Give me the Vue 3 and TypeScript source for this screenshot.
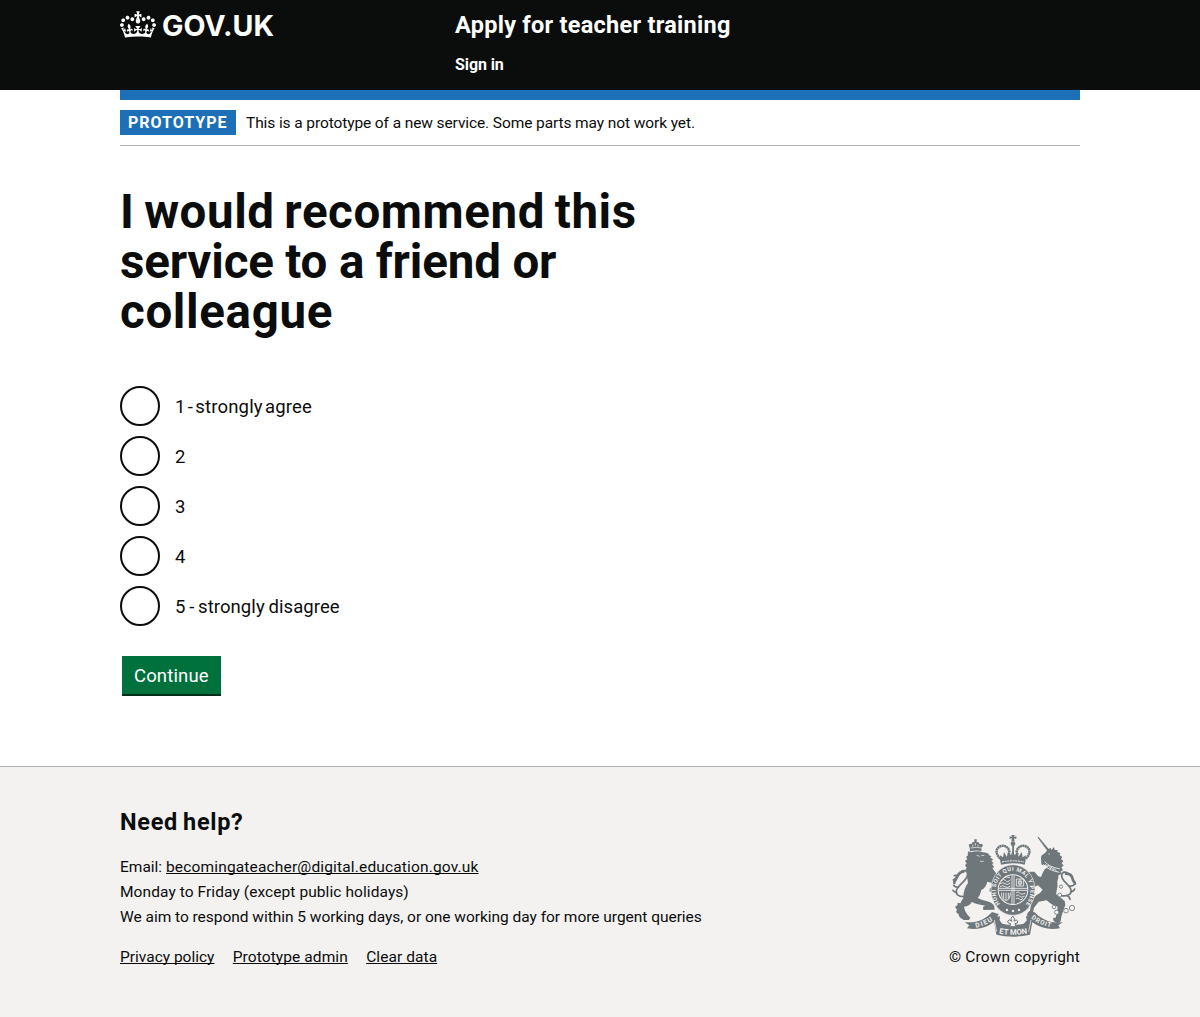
<script setup lang="ts">
import { ref } from 'vue'

interface Option {
  value: string
  label: string
  tracking: string
}

const options: Option[] = [
  { value: '1', label: '1 - strongly agree', tracking: 'tight' },
  { value: '2', label: '2', tracking: '' },
  { value: '3', label: '3', tracking: '' },
  { value: '4', label: '4', tracking: '' },
  { value: '5', label: '5 - strongly disagree', tracking: 'snug' },
]

const selected = ref<string>('')
</script>

<template>
  <div class="page">
    <header class="header">
      <div class="container header-row">
        <a class="logo" href="#">
          <svg class="crown" viewBox="0 0 132 97" width="36" height="27" aria-hidden="true">
            <path fill="currentColor" fill-rule="evenodd" d="M25 30.2c3.5 1.5 7.7-.2 9.1-3.7 1.5-3.6-.2-7.8-3.9-9.2-3.6-1.4-7.6.3-9.1 3.9-1.4 3.5.3 7.5 3.9 9zM9 39.5c3.6 1.5 7.8-.2 9.2-3.7 1.5-3.6-.2-7.8-3.9-9.1-3.6-1.5-7.6.2-9.1 3.8-1.4 3.5.3 7.5 3.8 9zM4.4 57.2c3.5 1.5 7.7-.2 9.1-3.8 1.5-3.6-.2-7.7-3.9-9.1-3.5-1.5-7.6.3-9.1 3.8-1.4 3.5.3 7.6 3.9 9.1zm38.3-21.4c3.5 1.5 7.7-.2 9.1-3.8 1.5-3.6-.2-7.7-3.9-9.1-3.6-1.5-7.6.3-9.1 3.8-1.3 3.6.4 7.7 3.9 9.1zm64.4-5.6c-3.6 1.5-7.8-.2-9.1-3.7-1.5-3.6.2-7.8 3.8-9.2 3.6-1.4 7.7.3 9.2 3.9 1.3 3.5-.4 7.5-3.9 9zm15.9 9.3c-3.6 1.5-7.7-.2-9.1-3.7-1.5-3.6.2-7.8 3.7-9.1 3.6-1.5 7.7.2 9.2 3.8 1.5 3.5-.3 7.5-3.8 9zm4.7 17.7c-3.6 1.5-7.8-.2-9.2-3.8-1.5-3.6.2-7.7 3.9-9.1 3.6-1.5 7.7.3 9.2 3.8 1.3 3.5-.4 7.6-3.9 9.1zM89.3 35.8c-3.6 1.5-7.8-.2-9.2-3.8-1.4-3.6.2-7.7 3.9-9.1 3.6-1.5 7.7.3 9.2 3.8 1.4 3.6-.3 7.7-3.9 9.1zM69.7 17.7l8.9 4.7V9.3l-8.9 2.8c-.2-.3-.5-.6-.9-.9L72.4 0H59.6l3.5 11.2c-.3.3-.6.5-.9.9l-8.8-2.8v13.1l8.8-4.7c.3.3.6.7.9.9l-5 15.4v.1c-.2.8-.4 1.6-.4 2.4 0 4.1 3.1 7.5 7 8.1h.2c.3 0 .7.1 1 .1.4 0 .7 0 1-.1h.2c4-.6 7.1-4.1 7.1-8.1 0-.8-.1-1.7-.4-2.4V34l-5.1-15.4c.4-.2.7-.6 1-.9zM66 92.8c16.9 0 32.8 1.1 47.1 3.2 4-16.9 8.9-26.7 14-33.5l-9.6-3.4c1 4.9 1.1 7.2 0 10.2-1.5-1.4-3-4.3-4.2-8.7L108.6 76c2.8-2 5-3.2 7.5-3.3-4.4 9.4-10 11.9-13.6 11.2-4.3-.8-6.3-4.6-5.6-7.9 1-4.7 5.7-5.9 8-.5 4.3-8.7-3-11.4-7.6-8.8 7.1-7.2 7.9-13.5 2.1-21.1-8 6.1-8.1 12.3-4.5 20.8-4.7-5.4-12.1-2.5-9.5 6.2 3.4-5.2 7.9-2 7.2 3.1-.6 4.3-6.4 7.8-13.5 7.2-10.3-.9-10.9-8-11.2-13.8 2.5-.5 7.1 1.8 11 7.3L80.2 60c-4.1 4.4-8 5.3-12.3 5.4 1.4-4.4 8-11.6 8-11.6H55.5s6.4 7.2 7.9 11.6c-4.2-.1-8-1-12.3-5.4l1.4 16.4c3.9-5.5 8.5-7.7 10.9-7.3-.3 5.8-.9 12.8-11.1 13.8-7.2.6-12.9-2.9-13.5-7.2-.7-5 3.8-8.3 7.1-3.1 2.7-8.7-4.6-11.6-9.4-6.2 3.7-8.5 3.6-14.7-4.6-20.8-5.8 7.6-5 13.9 2.2 21.1-4.7-2.6-11.9.1-7.7 8.8 2.3-5.5 7.1-4.2 8.1.5.7 3.3-1.3 7.1-5.7 7.9-3.5.7-9-1.8-13.5-11.2 2.5.1 4.7 1.3 7.5 3.3l-4.7-15.4c-1.2 4.4-2.7 7.2-4.3 8.7-1.1-3-.9-5.3 0-10.2l-9.5 3.4c5 6.9 9.9 16.7 14 33.5 14.8-2.1 30.8-3.2 47.7-3.2z" />
          </svg>
          <span class="logotype">GOV.UK</span>
        </a>
        <div class="header-content">
          <a class="service-name" href="#">Apply for teacher training</a>
          <nav><a class="nav-link" href="#">Sign in</a></nav>
        </div>
      </div>
    </header>

    <div class="container body">
      <div class="phase-banner">
        <strong class="tag">PROTOTYPE</strong>
        <span class="phase-text">This is a prototype of a new service. Some parts may not work yet.</span>
      </div>

      <main>
        <form @submit.prevent>
          <fieldset>
            <legend>
              <h1>
                <span class="line-a">I would recommend this</span>
                <span class="line-b">service to a friend or</span>
                <span class="line-c">colleague</span>
              </h1>
            </legend>
            <div class="radios">
              <label v-for="o in options" :key="o.value" class="radio">
                <input v-model="selected" type="radio" name="recommend" :value="o.value" />
                <span :class="['radio-label', o.tracking]">{{ o.label }}</span>
              </label>
            </div>
          </fieldset>
          <button type="submit">Continue</button>
        </form>
      </main>
    </div>

    <footer class="footer">
      <div class="container footer-row">
        <div>
          <h2>Need help?</h2>
          <p>Email: <a class="email" href="#">becomingateacher@digital.education.gov.uk</a></p>
          <p class="hours">Monday to Friday (except public holidays)</p>
          <p class="respond">We aim to respond within 5 working days, or one working day for more urgent queries</p>
          <ul class="links">
            <li><a href="#">Privacy policy</a></li>
            <li><a class="admin" href="#">Prototype admin</a></li>
            <li><a class="clear" href="#">Clear data</a></li>
          </ul>
        </div>
        <a class="copyright" href="#">
          <svg class="crest" viewBox="36 30 375 306" width="125" height="102" aria-hidden="true">
            <defs>
              <path id="garter" d="M180 237A52 60 0 1 1 258 237" />
              <path id="scroll-l" d="M108 308Q140 301 165 282" />
              <path id="scroll-m" d="M174 325Q218 334 265 325" />
              <path id="scroll-r" d="M273 280Q301 301 337 308" />
            </defs>
            <g fill="#6f777b">
              <!-- lion: crown, then mane and body -->
              <path d="M90 79l-1-11-3-8 4-4 5 1 3-6 5 0 0-8h7v8l6 1 3 6 6-2 4 4-4 8-1 10q-17-4-34 1z" />
              <path d="M93 82q18-6 36 0l10 1 9 5-3 2 10 4-5 3 10 7-6 3 7 8-5 2 7 10-6 1 4 7 6 8q7 8 3 24l-2 22-12 12-8-2 2-9 7-3-3-14-12-3q-4 18-18 25-3 16-11 24 10 6 28 10 16 3 22 15l1 10-34 1-1-9 7-4q-24-2-41-11-6 13-23 14l3 12 8 13 8 8-4 7-16 0-12-8-4-10-7-6 3-7-6-9 7-4 1-8 8 2q4-10 9-15-1-26 14-46-4-20-4-38l-4-2 4-6-5-7 5-6-5-7 7-6-4-6 6-5-1-7 3-5z" />
            </g>
            <!-- tails -->
            <g fill="none" stroke="#6f777b" stroke-linecap="round">
              <path d="M80 214C55 218 42 206 52 190s30-25 31-42c0-10-8-13-17-10" stroke-width="5" />
              <path d="M70 140C58 140 54 150 50 158c-3 8-8 10-7 16" stroke-width="8" />
              <path d="M51 151l-8 1M47 160l-7 5M55 186q-8 2-14-5M50 202q-8 0-11-6" stroke-width="5" />
              <path d="M362 212C388 216 400 204 390 188s-25-22-25-36c0-12 12-14 20-6" stroke-width="5" />
              <path d="M378 146C392 146 396 152 398 162c1 8 6 8 7 14" stroke-width="8" />
              <path d="M387 183q9 2 17-5M392 200q9 0 12-8M380 211q9 5 10 12" stroke-width="5" />
            </g>
            <g fill="#6f777b">
              <!-- unicorn: horn, then head and body -->
              <path d="M292 37l4-1 35 42-6 4z" />
              <path d="M303 100l1-8 12-9 8-11 8-3 2 6 8-9 2 9 9 0-1 6 9 3-2 6 8 6-4 5 7 8-5 5 6 8-7 5 5 8-7 5 2 7-9 4 0 8-3 10q2 14-2 28l-2 10q14 11 26 21l2 12-6 16-6 19-2 14-8 5-13-5-2-10 8-1 3-12 3-21q-19-5-33-19l-24 4-14 18-3 14-5 9-8 4-6-5 5-9 5-4 4-22q6-22 26-31l8-10-14-13-13 6 4 12-5 7-6-2-6-15-14-12 1-11-9-8 4-8 13 2 4 11 12 6 1-6-13-14 1-9 15 0 12 14 8 2 5-12 6-11 9-6-7-8-7 2-5-3z" />
              <!-- scrolls -->
              <path d="M74 292l24 0c26-3 43-15 58-31l20 6-9 19c-19 20-51 31-86 24l7-9z" />
              <path d="M368 292l-24 0c-27-3-45-15-62-32l-19 7 8 19c19 20 54 31 89 24l-5-9z" />
              <path d="M160 277l20-3-1 12 8 10q31 7 64 0l9-10-2-13 22 3-10 53q-51 12-101 0z" />
            </g>
            <!-- faces, collar and folds -->
            <g fill="none" stroke="#f3f2f1" stroke-width="2.2">
              <path d="M110 91l9 3M124 92l9-1M120 108q5 4 11 0" />
              <path d="M92 69q17-4 34 0M98 59v6M106 54v8M114 59v6" />
              <path d="M309 118q14 17 49 24M314 110q14 16 46 22" stroke-width="2.5" />
              <path d="M316 118l7 8 1-6 8 12 1-7 8 11 1-6 8 9" />
              <path d="M325 86l5 2M163 285l7 35M273 285l-7 35M180 284l7 10M260 284l-9 10" />
            </g>
            <g fill="#f3f2f1" stroke="#6f777b" stroke-width="2.5">
              <circle cx="342" cy="246" r="5.500" /><circle cx="350" cy="262" r="6.500" />
              <circle cx="378" cy="257" r="7" /><circle cx="396" cy="249" r="8" />
              <circle cx="359" cy="210" r="6" /><circle cx="363" cy="185" r="5" />
            </g>
            <!-- garter and quartered shield -->
            <ellipse cx="219" cy="195" rx="66" ry="76" fill="#6f777b" stroke="#f3f2f1" stroke-width="2" />
            <circle cx="219" cy="194" r="46" fill="#f3f2f1" />
            <circle cx="219" cy="194" r="43" fill="#6f777b" />
            <g fill="none" stroke="#f3f2f1" stroke-width="2.6">
              <path d="M216 151v86M222 151v86M176 190h86M176 196h86" />
              <path d="M184 167q7-8 13 0t14-3M180 176q8-6 15 0t16-2M180 185q8-6 15 0t16-2M193 158q8-4 17 0M229 162h22v21h-22zM235 168h10v9h-10zM240 162v21" />
              <path d="M185 203v9q3 14 14 14t12-23M191 203v18M198 203v22M205 203v18M228 204q7-7 11 0t17 0M228 213q7-7 11 0t15 0M228 222q6-6 10 0t11-2" />
            </g>
            <g fill="#f3f2f1">
              <circle cx="201" cy="255" r="3.500" /><circle cx="219" cy="258" r="3.500" /><circle cx="237" cy="255" r="3.500" />
            </g>
            <text class="motto" font-size="17"><textPath href="#garter" textLength="262" lengthAdjust="spacing">HONI SOIT QUI MAL Y PENSE</textPath></text>
            <!-- royal crown -->
            <path d="M181 121l-6-18-11-16v-16l13-14 24-2 8 6 1-31h18l1 31 9-6 22 2 13 14v16l-11 16-6 18q-38-9-75 0z" fill="#f3f2f1" />
            <g fill="#6f777b">
              <path d="M180 105l0-14 9 6 3-16 8 14 6-14 7 10 5-15 6 15 7-10 5 14 9-14 3 16 9-6 0 14-3 14q-36-9-71 0z" />
              <path d="M216.500 55h5.500v31h-5.500zM214 30h10l-2 6 7-2v8l-7-2 2 9h-10l2-9-7 2v-8l7 2z" />
              <circle cx="219" cy="56" r="7" />
            </g>
            <path d="M181 101q-15-15-10-28c9-16 33-14 37 6l-3 12M257 101q15-15 10-28c-9-16-33-14-37 6l3 12" fill="none" stroke="#6f777b" stroke-width="7.500" stroke-dasharray="6 1" />
            <path d="M186 111q33-7 66 0" fill="none" stroke="#f3f2f1" stroke-width="3" stroke-dasharray="6 2" />
            <!-- fleur-de-lis and scroll lettering -->
            <path d="M218 273q9 8 4 16 7-8 11-1 2 8-8 8l3 9h-19l3-9q-10 0-9-8 5-7 12 1-6-8 3-16z" fill="#f3f2f1" stroke="#6f777b" stroke-width="3" />
            <text class="motto" font-size="20"><textPath href="#scroll-l" textLength="55">DIEU</textPath></text>
            <text class="motto" font-size="23"><textPath href="#scroll-m" startOffset="3" textLength="86">ET MON</textPath></text>
            <text class="motto" font-size="19"><textPath href="#scroll-r" textLength="65">DROIT</textPath></text>
          </svg>
          <span>© Crown copyright</span>
        </a>
      </div>
    </footer>
  </div>
</template>

<style>
body {
  margin: 0;
  background: #f3f2f1;
}
</style>

<style scoped>
.page {
  min-height: 1017px;
  display: flex;
  flex-direction: column;
  background: #fff;
  color: #0b0c0c;
  font-family: Roboto, "Liberation Sans", sans-serif;
  font-size: 15.5px;
  line-height: 25px;
}
a {
  color: inherit;
}
.container {
  box-sizing: border-box;
  width: 960px;
  margin: 0 auto;
}
.header {
  height: 90px;
  background: #0b0c0c;
  color: #fff;
}
.header a {
  text-decoration: none;
}
.header-row {
  display: flex;
}
.logo {
  display: flex;
  width: 335px;
  height: 50px;
  box-sizing: border-box;
  padding-top: 10.5px;
}
.crown {
  display: block;
}
.logotype {
  margin-left: 6px;
  font: 700 28.6px/29px Inter, "Liberation Sans", sans-serif;
  letter-spacing: 0;
}
.header-content {
  display: flex;
  flex-direction: column;
}
.service-name {
  padding-top: 10px;
  font-size: 23.5px;
  line-height: 30px;
  font-weight: 700;
  letter-spacing: 0.27px;
}
.nav-link {
  display: block;
  margin-top: 12px;
  font-size: 16px;
  font-weight: 700;
  letter-spacing: -0.1px;
}
.body {
  height: 676px;
}
.phase-banner {
  display: flex;
  height: 56px;
  box-sizing: border-box;
  padding: 10px 0;
  border-top: 10px solid #1d70b8;
  border-bottom: 1px solid #b1b4b6;
}
.tag {
  box-sizing: border-box;
  width: 116px;
  height: 25px;
  padding-left: 8px;
  background: #1d70b8;
  color: #fff;
  font-size: 16px;
  letter-spacing: 1px;
}
.phase-text {
  margin-left: 10px;
  line-height: 26px;
  letter-spacing: -0.1px;
}
main {
  padding-top: 41px;
}
fieldset {
  margin: 0;
  padding: 0;
  border: 0;
}
legend {
  padding: 0;
}
h1 {
  margin: 0;
  font-size: 47.5px;
  line-height: 50px;
  font-weight: 700;
}
h1 span {
  display: block;
}
.line-a {
  letter-spacing: 0.58px;
  word-spacing: -2.7px;
}
.line-b {
  letter-spacing: -0.17px;
}
.line-c {
  letter-spacing: 0.65px;
}
.radios {
  display: flex;
  flex-direction: column;
  gap: 10px;
  padding-top: 49px;
}
.radio {
  display: flex;
  align-items: center;
  height: 40px;
  font-size: 18.5px;
  cursor: pointer;
}
.radio input {
  appearance: none;
  box-sizing: border-box;
  width: 40px;
  height: 40px;
  margin: 0 15px 0 0;
  border: 2px solid #0b0c0c;
  border-radius: 50%;
  background: transparent;
}
.radio input:checked {
  background: radial-gradient(circle, #0b0c0c 10px, transparent 10.5px);
}
.radio-label {
  line-height: 25px;
  padding-top: 3px;
}
.tight {
  letter-spacing: 0.16px;
  word-spacing: -2.5px;
}
.snug {
  letter-spacing: 0.08px;
  word-spacing: -1px;
}
button {
  display: block;
  box-sizing: border-box;
  width: 99px;
  height: 38px;
  margin: 30px 0 0 2px;
  padding: 1px 0 0 12px;
  border: 0;
  background: #00703c;
  box-shadow: 0 2px 0 #002d18;
  color: #fff;
  font: 400 18.5px/38px Roboto, "Liberation Sans", sans-serif;
  letter-spacing: 0.14px;
  text-align: left;
}
.footer {
  flex: 1;
  box-sizing: border-box;
  padding-top: 40px;
  border-top: 1px solid #b1b4b6;
  background: #f3f2f1;
}
.footer-row {
  display: flex;
  justify-content: space-between;
  align-items: flex-end;
}
h2 {
  margin: 0 0 18px;
  font-size: 23.5px;
  line-height: 30px;
  font-weight: 700;
  letter-spacing: 0.7px;
  word-spacing: -1.5px;
}
p {
  margin: 0;
}
.footer a {
  text-underline-offset: 1px;
  text-decoration-thickness: 1px;
  text-decoration-skip-ink: none;
}
.email {
  letter-spacing: 0.16px;
}
.hours {
  letter-spacing: 0.08px;
}
.respond {
  letter-spacing: -0.03px;
}
.links {
  display: flex;
  gap: 18.3px;
  margin: 15px 0 0;
  padding: 0;
  list-style: none;
}
.admin {
  letter-spacing: 0.09px;
}
.clear {
  letter-spacing: 0.07px;
}
.footer .copyright {
  display: flex;
  flex-direction: column;
  align-items: flex-end;
  letter-spacing: 0.16px;
  text-decoration: none;
}
.crest {
  display: block;
  margin: 0 3px 8px 0;
}
.motto {
  font-family: Roboto, "Liberation Sans", sans-serif;
  font-weight: 700;
  letter-spacing: 0;
  fill: #f3f2f1;
}
</style>
